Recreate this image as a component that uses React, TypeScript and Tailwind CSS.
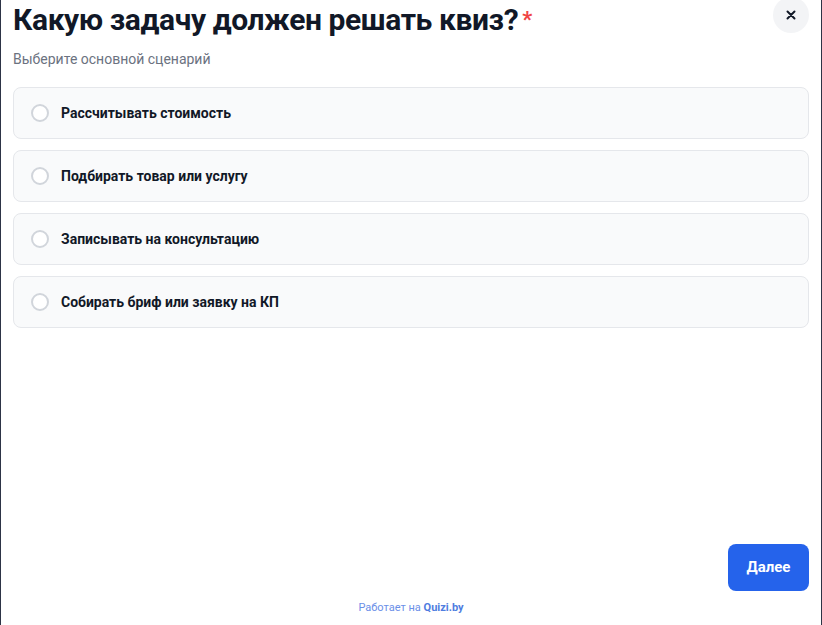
import React, { useState } from "react";

const options = [
  "Рассчитывать стоимость",
  "Подбирать товар или услугу",
  "Записывать на консультацию",
  "Собирать бриф или заявку на КП",
];

const App = () => {
  const [selected, setSelected] = useState<number | null>(null);

  return (
    <div
      className="min-h-screen h-[625px] bg-[#2d3446] px-px"
      style={{ fontFamily: "Roboto, 'Noto Sans', sans-serif" }}
    >
      <div className="h-full bg-white flex flex-col px-3">
        <div className="flex items-start justify-between">
          <h1 className="text-[30px] leading-[40px] font-bold text-[#111827] tracking-[-0.4px]">
            Какую задачу должен решать квиз?
            <span className="text-[#ef4444] text-[22px] align-top ml-1">*</span>
          </h1>
          <button className="w-9 h-9 -mt-[3px] rounded-full bg-[#f3f4f6] flex items-center justify-center text-[#111827]">
            <svg width="10" height="10" viewBox="0 0 10 10" fill="none">
              <path d="M1.5 1.5L8.5 8.5M8.5 1.5L1.5 8.5" stroke="currentColor" strokeWidth="2" strokeLinecap="round" />
            </svg>
          </button>
        </div>
        <p className="mt-[9px] text-[14px] leading-5 text-[#6b7280]">Выберите основной сценарий</p>

        <div className="mt-[18px] flex flex-col gap-[11px]">
          {options.map((label, i) => (
            <button
              key={label}
              onClick={() => setSelected(i)}
              className="h-[52px] flex items-center gap-[12px] rounded-lg border border-[#e5e7eb] bg-[#f9fafb] px-[17px] text-left"
            >
              <span
                className={
                  selected === i
                    ? "w-[18px] h-[18px] rounded-full border-[5px] border-[#2563eb] bg-white"
                    : "w-[18px] h-[18px] rounded-full border-2 border-[#d1d5db] bg-white"
                }
              />
              <span className="text-[14px] font-bold text-[#111827]">{label}</span>
            </button>
          ))}
        </div>

        <div className="flex-1" />

        <div className="flex justify-end">
          <button className="w-[81px] h-[47px] rounded-lg bg-[#2563eb] text-white text-[15px] font-bold">
            Далее
          </button>
        </div>
        <p className="mt-[9px] mb-[9px] text-center text-[11px] leading-4 text-[#6b8fe8]">
          Работает на <span className="font-bold text-[#4f7de0]">Quizi.by</span>
        </p>
      </div>
    </div>
  );
};

export default App;
